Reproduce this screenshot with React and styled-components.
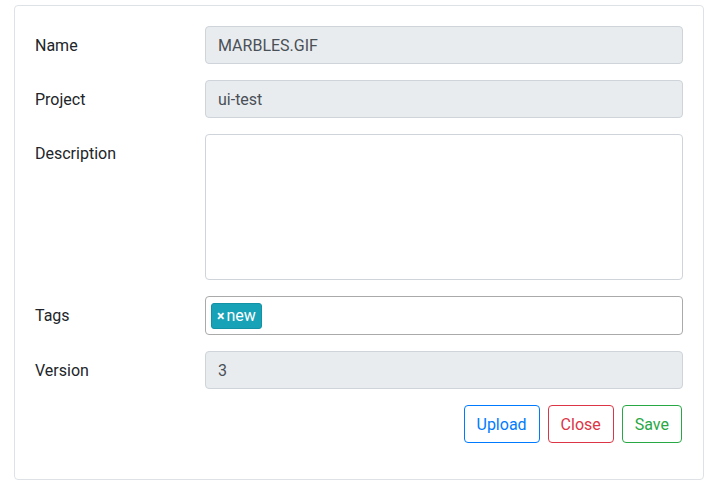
import styled, { createGlobalStyle } from 'styled-components';

const Global = createGlobalStyle`
  body {
    margin: 0;
    background: #fff;
    font-family: Roboto, "Liberation Sans", sans-serif;
    font-size: 16px;
    line-height: 1.5;
    color: #212529;
  }
  * { box-sizing: border-box; }
`;

const Page = styled.div`
  padding: 5px 16px 0 14px;
`;

const Card = styled.div`
  border: 1px solid #dee2e6;
  border-radius: 4px;
  padding: 20px;
`;

const Row = styled.div`
  display: grid;
  grid-template-columns: 170px 1fr;
  margin-bottom: 16px;
`;

const Label = styled.label`
  padding-top: 8px;
  line-height: 24px;
`;

const Input = styled.div`
  height: ${p => p.$tall ? '146px' : '38px'};
  padding: 7px 12px 5px;
  line-height: 24px;
  color: #495057;
  background: ${p => p.$readOnly ? '#e9ecef' : '#fff'};
  border: 1px solid #ced4da;
  border-radius: 4px;
`;

const TagBox = styled.div`
  height: 39px;
  border: 1px solid #aaa;
  border-radius: 4px;
  padding: 5px;
  display: flex;
  align-items: center;
`;

const Tag = styled.span`
  display: inline-flex;
  align-items: center;
  height: 26px;
  padding: 1px 5px 0;
  background: #17a2b8;
  border: 1px solid #1391a5;
  border-radius: 3px;
  color: #fff;
  line-height: 24px;
`;

const Remove = styled.span`
  font-weight: bold;
  font-size: 14px;
  margin-right: 2px;
`;

const Actions = styled.div`
  display: flex;
  justify-content: flex-end;
  gap: 8px;
  padding-right: 1px;
  margin-bottom: 16px;
`;

const Button = styled.button`
  font: inherit;
  line-height: 24px;
  padding: 7px 12px 5px;
  height: 38px;
  background: transparent;
  border: 1px solid ${p => p.$color};
  color: ${p => p.$color};
  border-radius: 4px;
  cursor: pointer;
`;

export default function App() {
  return (
    <Page>
      <Global />
      <Card>
        <Row>
          <Label>Name</Label>
          <Input $readOnly>MARBLES.GIF</Input>
        </Row>
        <Row>
          <Label>Project</Label>
          <Input $readOnly>ui-test</Input>
        </Row>
        <Row>
          <Label>Description</Label>
          <Input $tall />
        </Row>
        <Row>
          <Label>Tags</Label>
          <TagBox>
            <Tag><Remove>×</Remove>new</Tag>
          </TagBox>
        </Row>
        <Row>
          <Label>Version</Label>
          <Input $readOnly>3</Input>
        </Row>
        <Actions>
          <Button $color="#007bff">Upload</Button>
          <Button $color="#dc3545">Close</Button>
          <Button $color="#28a745">Save</Button>
        </Actions>
      </Card>
    </Page>
  );
}
